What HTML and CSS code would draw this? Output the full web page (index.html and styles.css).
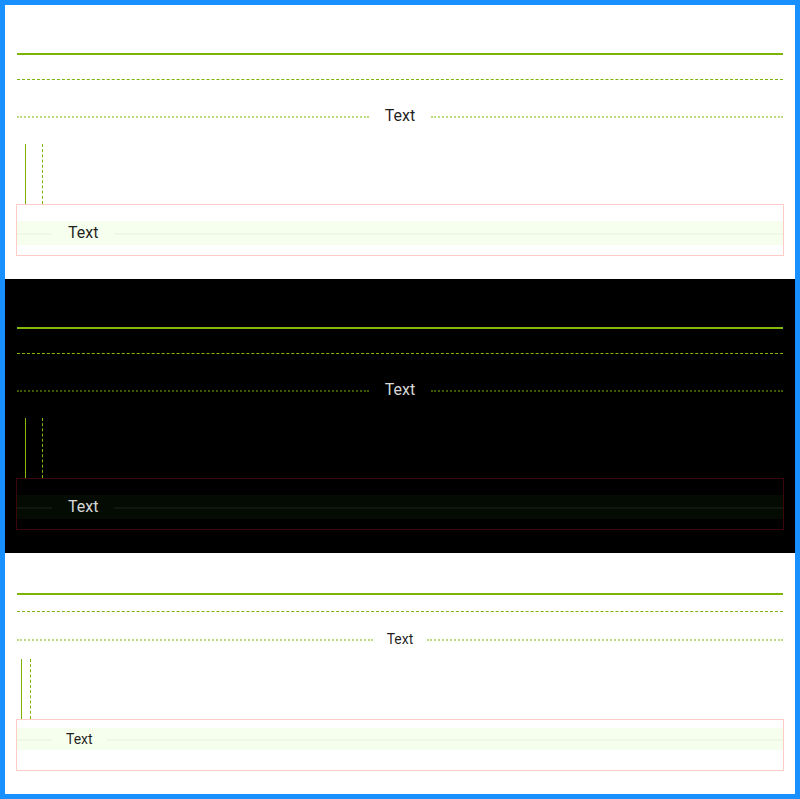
FILE: index.html
```html
<!DOCTYPE html>
<html lang="en">
<head>
<meta charset="utf-8">
<title>Divider</title>
<link rel="stylesheet" href="styles.css">
</head>
<body>
  <section class="panel">
    <div class="div-solid"></div>
    <div class="div-dashed"></div>
    <div class="div-text"><span class="div-label">Text</span></div>
    <div class="vwrap"><span class="vline"></span><span class="vline vline-dashed"></span></div>
    <div class="box"><div class="div-left"><span class="div-label">Text</span></div></div>
  </section>
  <section class="panel panel-dark">
    <div class="div-solid"></div>
    <div class="div-dashed"></div>
    <div class="div-text"><span class="div-label">Text</span></div>
    <div class="vwrap"><span class="vline"></span><span class="vline vline-dashed"></span></div>
    <div class="box"><div class="div-left"><span class="div-label">Text</span></div></div>
  </section>
  <section class="panel panel-small">
    <div class="div-solid"></div>
    <div class="div-dashed"></div>
    <div class="div-text"><span class="div-label">Text</span></div>
    <div class="vwrap"><span class="vline"></span><span class="vline vline-dashed"></span></div>
    <div class="box"><div class="div-left"><span class="div-label">Text</span></div></div>
  </section>
</body>
</html>
```
FILE: styles.css
```css
* { box-sizing: border-box; }
html, body { margin: 0; padding: 0; }
body {
  border: 5px solid #1890ff;
  font-family: Roboto, "Liberation Sans", Arial, sans-serif;
  background: #fff;
}
.panel {
  padding: 24px 12px;
  background: #fff;
  color: rgba(0, 0, 0, 0.88);
  --green: #7cb305;
  --dot: rgba(124, 179, 5, 0.5);
  --outline: #ffccc7;
  --band: #f6ffed;
  --split: rgba(5, 5, 5, 0.06);
  --fs: 16px;
  --lh: 24px;
  --gap: 24px;
  --vm: 8px;
}
.panel-dark {
  background: #000;
  color: rgba(255, 255, 255, 0.85);
  --green: #84b80b;
  --outline: #3a080b;
  --band: #040b03;
  --split: rgba(253, 253, 253, 0.1);
}
.panel-small {
  --fs: 14px;
  --lh: 22px;
  --gap: 16px;
  --vm: 4px;
}
.div-solid {
  border-top: 2px solid var(--green);
  margin: var(--gap) 0;
}
.div-dashed {
  border-top: 1px dashed var(--green);
  margin: var(--gap) 0;
}
.div-text {
  display: flex;
  align-items: center;
  height: var(--lh);
  margin: 16px 0;
  font-size: var(--fs);
  line-height: var(--lh);
}
.panel-small .div-text { margin-bottom: 9px; }
.div-text::before,
.div-text::after {
  content: "";
  flex: 1 1 0;
  border-top: 2px dotted var(--dot);
  transform: translateY(50%);
}
.div-label {
  padding: 0 1em;
  white-space: nowrap;
}
.vwrap {
  display: flex;
  height: 61px;
}
.vline {
  width: 0;
  height: 60px;
  margin: 0 var(--vm);
  border-left: 1px solid var(--green);
}
.vline-dashed { border-left-style: dashed; }
.box {
  height: 50px;
  outline: 1px solid var(--outline);
  padding-top: 16px;
}
.panel-small .box { padding-top: 8px; }
.div-left {
  display: flex;
  align-items: center;
  height: var(--lh);
  background: var(--band);
  font-size: var(--fs);
  line-height: var(--lh);
}
.div-left::before,
.div-left::after {
  content: "";
  border-top: 1px solid var(--split);
  transform: translateY(50%);
}
.div-left::before { flex: 0 0 35px; }
.div-left::after { flex: 1 1 0; }
```
